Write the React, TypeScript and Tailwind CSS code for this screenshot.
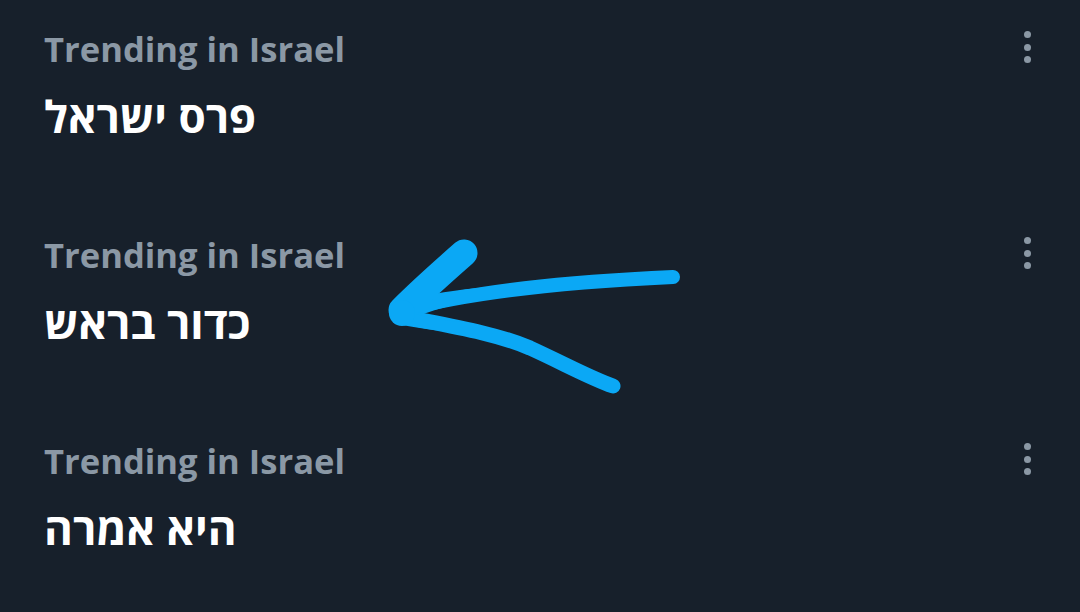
import * as React from 'react';

const trends = ['פרס ישראל', 'כדור בראש', 'היא אמרה'];

const Dots = () => (
  <div className="flex flex-col items-center gap-[5.5px] pt-[5px]">
    <span className="h-[7px] w-[7px] rounded-full bg-[#8b98a5]" />
    <span className="h-[7px] w-[7px] rounded-full bg-[#8b98a5]" />
    <span className="h-[7px] w-[7px] rounded-full bg-[#8b98a5]" />
  </div>
);

const Arrow = () => (
  <svg
    className="pointer-events-none absolute left-0 top-0"
    width="1080"
    height="612"
    viewBox="0 0 1080 612"
    fill="none"
  >
    {/* shaft */}
    <path
      d="M404 310 C475 291 565 282 673 277"
      stroke="#0ba8f5"
      strokeWidth="14"
      strokeLinecap="round"
    />
    <path d="M396 302 C430 294 460 289 485 287.5 L485 299.5 C460 302 430 310 404 322 Z" fill="#0ba8f5" />
    {/* lower stroke */}
    <path
      d="M400 316 C450 326 495 333 530 348 C565 364 590 378 613 386"
      stroke="#0ba8f5"
      strokeWidth="15"
      strokeLinecap="round"
      strokeLinejoin="round"
    />
    <path d="M392 308 C420 316 440 320 460 322 L460 333 C440 331 415 328 398 324 Z" fill="#0ba8f5" />
    {/* upper stroke, fat */}
    <path d="M464 253 C440 274 420 292 402 310" stroke="#0ba8f5" strokeWidth="27" strokeLinecap="round" />
    <circle cx="402" cy="313" r="13" fill="#0ba8f5" />
  </svg>
);

export default function App() {
  return (
    <div
      className="relative h-[612px] w-[1080px] overflow-hidden bg-[#17202b]"
      style={{ fontFamily: '"Open Sans", "Noto Sans", sans-serif' }}
    >
      <div className="flex flex-col pt-[26px]">
        {trends.map((t) => (
          <div key={t} className="flex h-[206px] justify-between pl-[44px] pr-[49px]">
            <div className="flex flex-col">
              <span className="text-[34.6px] font-bold leading-[46px] text-[#8b98a5]">
                Trending in Israel
              </span>
              <span className="mt-[18px] text-[44px] font-bold leading-[52px] text-white">
                {t}
              </span>
            </div>
            <Dots />
          </div>
        ))}
      </div>
      <Arrow />
    </div>
  );
}
